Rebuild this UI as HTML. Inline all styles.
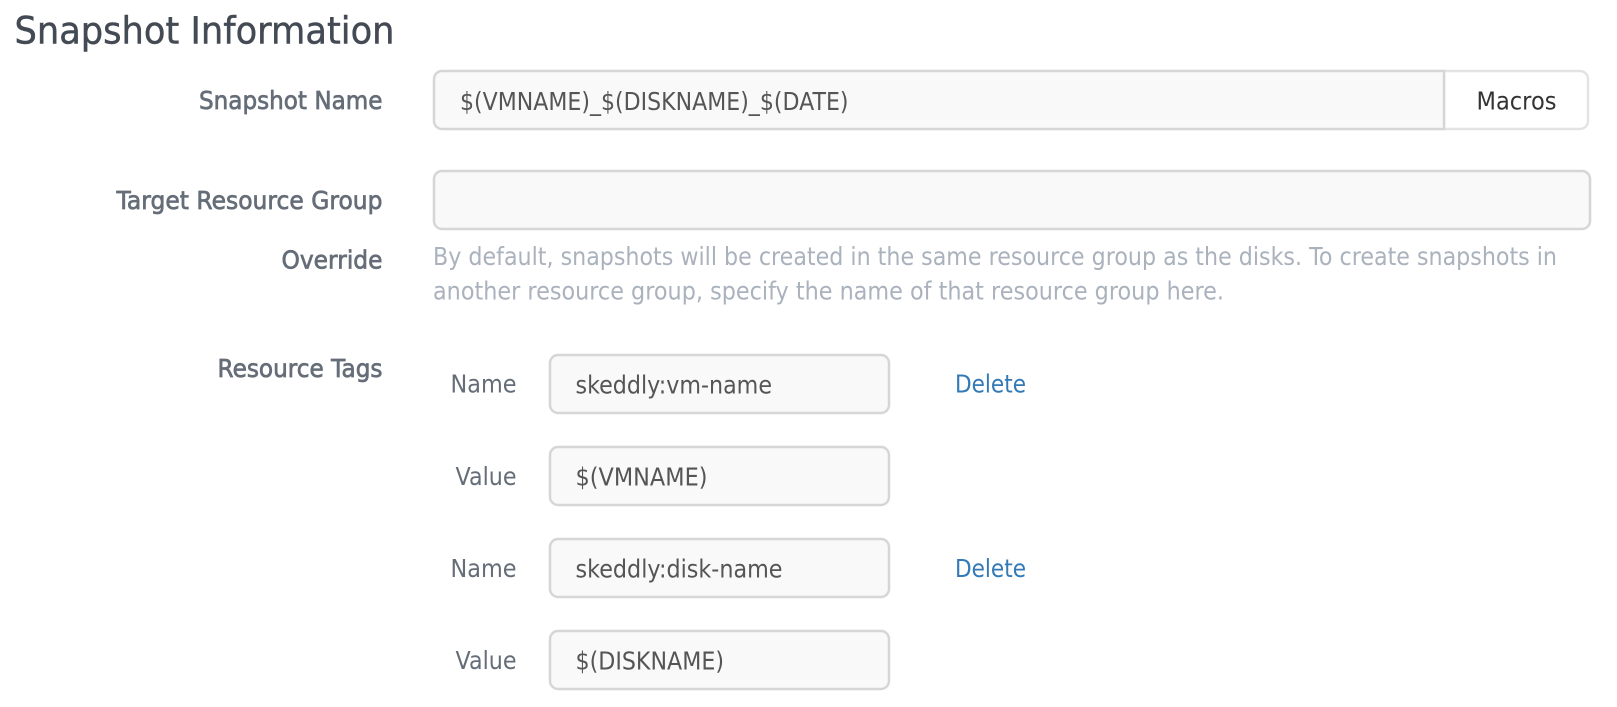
<!DOCTYPE html>
<html lang="en">
<head>
<meta charset="utf-8">
<title>Snapshot Information</title>
<style>
html,body{margin:0;padding:0;background:#fff;width:1617px;height:707px;overflow:hidden}
svg{display:block}
text{font-family:"DejaVu Sans","Liberation Sans",sans-serif;font-size:24.5px}
.h{font-size:37.5px;fill:#434a54;stroke:#434a54;stroke-width:.45px}
.l{fill:#656d78;stroke:#656d78;stroke-width:.7px}
.n{fill:#656d78}
.v{fill:#555}
.m{fill:#333}
.p{fill:#aab2bd}
.a{fill:#337ab7}
.b{fill:#f9f9f9;stroke:#d6d6d6;stroke-width:2.5}
</style>
</head>
<body>
<svg width="1617" height="707" viewBox="0 0 1617 707" xmlns="http://www.w3.org/2000/svg">
<text class="h" x="14.5" y="43.5" textLength="380" lengthAdjust="spacingAndGlyphs">Snapshot Information</text>

<text class="l" x="199" y="109" textLength="183.5" lengthAdjust="spacingAndGlyphs">Snapshot Name</text>
<path d="M1444 71H1580a8 8 0 0 1 8 8V121a8 8 0 0 1-8 8H1444Z" fill="#fff" stroke="#e3e3e3" stroke-width="2.5"/>
<path d="M1444 71H442a8 8 0 0 0-8 8V121a8 8 0 0 0 8 8H1444Z" fill="#f9f9f9" stroke="#d6d6d6" stroke-width="2.5"/>
<text class="v" x="460" y="110" textLength="388.5" lengthAdjust="spacingAndGlyphs">$(VMNAME)_$(DISKNAME)_$(DATE)</text>
<text class="m" x="1476.5" y="109.5" textLength="80" lengthAdjust="spacingAndGlyphs">Macros</text>

<text class="l" x="116.5" y="209" textLength="266" lengthAdjust="spacingAndGlyphs">Target Resource Group</text>
<text class="l" x="281.5" y="268.5" textLength="101" lengthAdjust="spacingAndGlyphs">Override</text>
<rect class="b" x="434" y="171" width="1156" height="58" rx="8"/>
<text class="p" x="433" y="265" textLength="1124" lengthAdjust="spacingAndGlyphs">By default, snapshots will be created in the same resource group as the disks. To create snapshots in</text>
<text class="p" x="433" y="299.5" textLength="791" lengthAdjust="spacingAndGlyphs">another resource group, specify the name of that resource group here.</text>

<text class="l" x="217.5" y="377" textLength="165" lengthAdjust="spacingAndGlyphs">Resource Tags</text>

<text class="n" x="450.5" y="392.5" textLength="66" lengthAdjust="spacingAndGlyphs">Name</text>
<rect class="b" x="550" y="355" width="339" height="58" rx="8"/>
<text class="v" x="575.5" y="393.5" textLength="196.5" lengthAdjust="spacingAndGlyphs">skeddly:vm-name</text>
<text class="a" x="955" y="392.5" textLength="71" lengthAdjust="spacingAndGlyphs">Delete</text>

<text class="n" x="455.5" y="485" textLength="61" lengthAdjust="spacingAndGlyphs">Value</text>
<rect class="b" x="550" y="447" width="339" height="58" rx="8"/>
<text class="v" x="575.5" y="485.5" textLength="132" lengthAdjust="spacingAndGlyphs">$(VMNAME)</text>

<text class="n" x="450.5" y="577" textLength="66" lengthAdjust="spacingAndGlyphs">Name</text>
<rect class="b" x="550" y="539" width="339" height="58" rx="8"/>
<text class="v" x="575.5" y="577.5" textLength="207" lengthAdjust="spacingAndGlyphs">skeddly:disk-name</text>
<text class="a" x="955" y="577" textLength="71" lengthAdjust="spacingAndGlyphs">Delete</text>

<text class="n" x="455.5" y="669" textLength="61" lengthAdjust="spacingAndGlyphs">Value</text>
<rect class="b" x="550" y="631" width="339" height="58" rx="8"/>
<text class="v" x="575.5" y="669.5" textLength="148.5" lengthAdjust="spacingAndGlyphs">$(DISKNAME)</text>
</svg>
</body>
</html>
